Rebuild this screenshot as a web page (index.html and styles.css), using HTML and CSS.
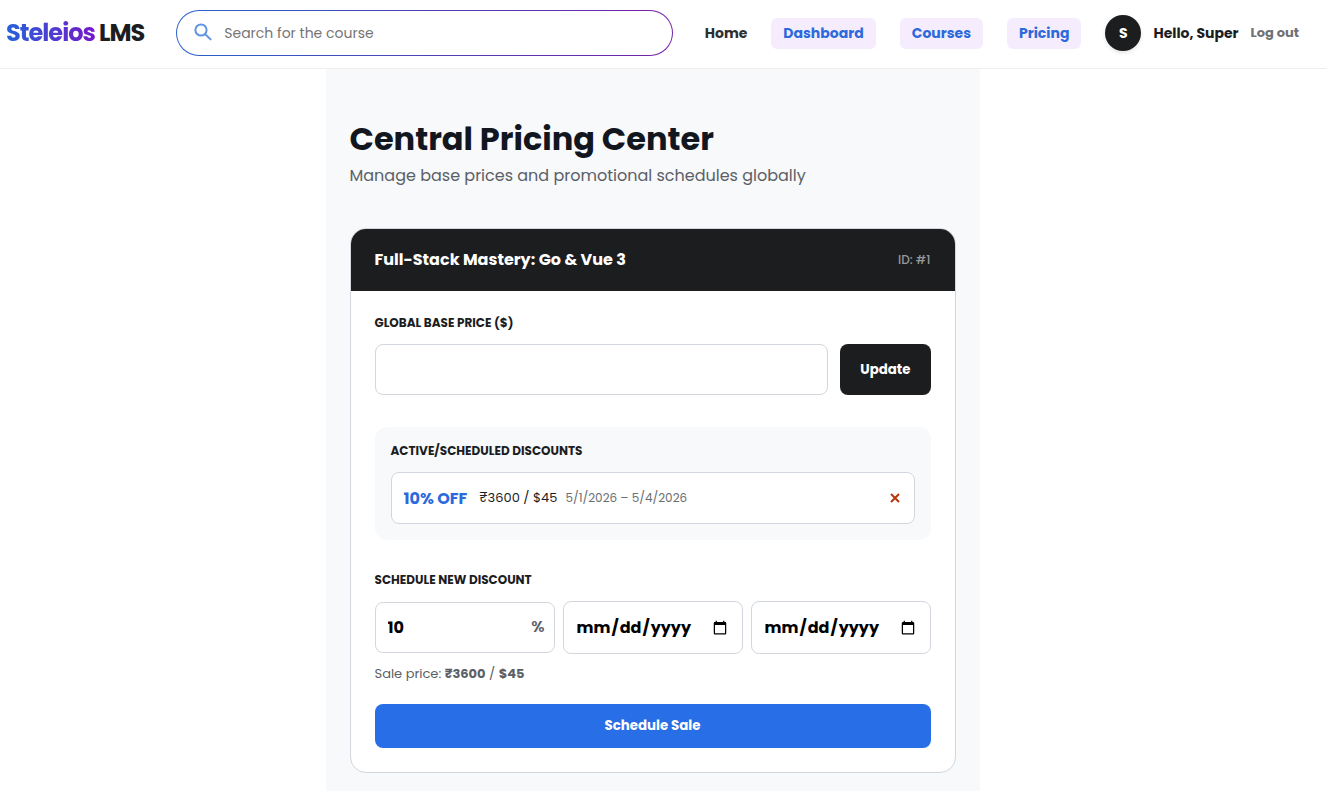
FILE: index.html
```html
<!DOCTYPE html>
<html lang="en">
<head>
    <meta charset="UTF-8">
    <meta name="viewport" content="width=device-width, initial-scale=1.0">
    <title>Steleios LMS</title>
    <link rel="stylesheet" href="styles.css">
</head>
<body>
    <header class="navbar">
        <a href="#" class="logo"><span class="logo-accent">Steleios</span> LMS</a>

        <form class="search" role="search">
            <svg class="search-icon" viewBox="0 0 18 18" aria-hidden="true">
                <circle cx="7" cy="6" r="5.6"/>
                <path d="M11.2 10.2 L16.6 15.4"/>
            </svg>
            <input type="search" class="search-input" placeholder="Search for the course" aria-label="Search for the course">
        </form>

        <nav class="nav-links">
            <a href="#" class="nav-link">Home</a>
            <a href="#" class="nav-link nav-pill">Dashboard</a>
            <a href="#" class="nav-link nav-pill">Courses</a>
            <a href="#" class="nav-link nav-pill">Pricing</a>
        </nav>

        <div class="user">
            <span class="avatar">S</span>
            <span class="user-name">Hello, Super</span>
            <button type="button" class="logout">Log out</button>
        </div>
    </header>

    <main class="pricing-page">
        <h1 class="page-title">Central Pricing Center</h1>
        <p class="page-subtitle">Manage base prices and promotional schedules globally</p>

        <section class="card">
            <div class="card-header">
                <h2 class="card-title">Full-Stack Mastery: Go &amp; Vue 3</h2>
                <span class="card-id">ID: #1</span>
            </div>

            <div class="card-body">
                <form class="section">
                    <label for="basePrice" class="label">Global Base Price ($)</label>
                    <div class="price-row">
                        <input type="number" id="basePrice" class="field">
                        <button type="button" class="btn btn-dark">Update</button>
                    </div>
                </form>

                <div class="section discounts">
                    <h3 class="label">Active/Scheduled Discounts</h3>
                    <div class="discount">
                        <strong class="discount-percent">10% OFF</strong>
                        <span class="discount-price">₹3600 / $45</span>
                        <span class="discount-dates">5/1/2026 – 5/4/2026</span>
                        <button type="button" class="remove" aria-label="Remove discount">
                            <svg class="remove-icon" viewBox="0 0 10 10" aria-hidden="true">
                                <path d="M1 1 L9 9 M9 1 L1 9"/>
                            </svg>
                        </button>
                    </div>
                </div>

                <form class="section">
                    <h3 class="label">Schedule New Discount</h3>
                    <div class="schedule-row">
                        <div class="percent-field">
                            <input type="text" inputmode="numeric" class="field" value="10" aria-label="Discount percent">
                            <span class="percent-sign">%</span>
                        </div>
                        <input type="date" class="field field-date" aria-label="Start date">
                        <input type="date" class="field field-date" aria-label="End date">
                    </div>
                    <p class="sale-price">Sale price: <strong>₹3600</strong> / <strong>$45</strong></p>
                    <button type="button" class="btn btn-primary">Schedule Sale</button>
                </form>
            </div>
        </section>
    </main>
</body>
</html>
```

FILE: styles.css
```css
* {
    box-sizing: border-box;
}

body {
    margin: 0;
    min-height: 100vh;
    display: flex;
    flex-direction: column;
    font-family: Poppins, Inter, "Noto Sans", sans-serif;
    color: #1c1d1f;
    background: #fff;
}

h1, h2, h3, p {
    margin: 0;
}

a {
    color: inherit;
    text-decoration: none;
}

button, input {
    font-family: inherit;
}

button {
    cursor: pointer;
}

/* Navbar */
.navbar {
    display: flex;
    align-items: center;
    padding: 10px 27px 12px 6px;
    border-bottom: 1px solid #eee;
}

.logo {
    font-size: 24px;
    line-height: 36px;
    font-weight: 700;
    letter-spacing: -1px;
    white-space: nowrap;
}

.logo-accent {
    background: linear-gradient(90deg, #2563d9, #7518c9);
    -webkit-background-clip: text;
    background-clip: text;
    color: transparent;
}

.search {
    flex: 1;
    display: flex;
    align-items: center;
    gap: 12px;
    height: 46px;
    margin: 0 32px;
    padding: 0 17px;
    border: 1px solid transparent;
    border-radius: 23px;
    background: linear-gradient(#fff, #fff) padding-box, linear-gradient(90deg, #2563c9, #7520a8) border-box;
}

.search-icon {
    width: 18px;
    height: 18px;
    fill: none;
    stroke: #5f96e3;
    stroke-width: 2;
    stroke-linecap: round;
    overflow: visible;
}

.search-input {
    flex: 1;
    min-width: 0;
    padding: 0;
    border: none;
    outline: none;
    background: none;
    font-size: 14px;
}

.search-input::placeholder {
    color: #757575;
}

.nav-links {
    display: flex;
    align-items: center;
    gap: 24px;
}

.nav-link {
    font-size: 14px;
    line-height: 21px;
    font-weight: 700;
    color: #2d2f31;
}

.nav-pill {
    padding: 5px 12px;
    border-radius: 6px;
    background: #f5edfd;
    color: #2b69dc;
}

.user {
    display: flex;
    align-items: center;
    gap: 12px;
    margin-left: 24px;
    white-space: nowrap;
}

.avatar {
    display: flex;
    align-items: center;
    justify-content: center;
    width: 36px;
    height: 36px;
    border-radius: 50%;
    background: #1c1d1f;
    box-shadow: 0 2px 4px rgba(0, 0, 0, 0.1);
    color: #fff;
    font-size: 14px;
    font-weight: 700;
}

.user-name {
    font-size: 14px;
    font-weight: 700;
}

.logout {
    padding: 0;
    border: none;
    background: none;
    color: #6f7173;
    font-size: 13px;
    font-weight: 700;
}

/* Pricing page */
.pricing-page {
    flex: 1;
    width: calc(50% - 9px);
    min-width: 600px;
    margin-left: calc(25% - 6px);
    padding: 48px 24px 18px;
    background: #f7f9fb;
}

.page-title {
    font-size: 32px;
    line-height: 43px;
    font-weight: 700;
    color: #12161f;
}

.page-subtitle {
    margin: 4px 0 40px;
    font-size: 16px;
    line-height: 24px;
    color: #5b6066;
}

.card {
    border: 1px solid #d1d7dc;
    border-radius: 16px;
    background: #fff;
    overflow: hidden;
}

.card-header {
    display: flex;
    align-items: center;
    justify-content: space-between;
    padding: 19px 24px;
    background: #1c1d1f;
    color: #fff;
}

.card-title {
    font-size: 16px;
    line-height: 24px;
    font-weight: 700;
}

.card-id {
    font-size: 12px;
    font-weight: 500;
    color: #98999b;
}

.card-body {
    display: flex;
    flex-direction: column;
    gap: 32px;
    padding: 24px;
}

.label {
    display: block;
    margin-bottom: 13px;
    font-size: 12px;
    line-height: 16px;
    font-weight: 700;
    text-transform: uppercase;
}

.field {
    width: 100%;
    min-width: 0;
    height: 51px;
    padding: 0 12px;
    border: 1px solid #d1d7dc;
    border-radius: 8px;
    background: #fff;
    color: #000;
    font-size: 16px;
    font-weight: 700;
}

.field-date {
    height: 53px;
}

.price-row {
    display: flex;
    gap: 12px;
}

.btn {
    border: none;
    border-radius: 8px;
    color: #fff;
    font-weight: 700;
}

.btn-dark {
    padding: 0 20px;
    background: #1c1d1f;
}

.btn-primary {
    width: 100%;
    height: 44px;
    background: #286ee6;
}

.discounts {
    padding: 16px;
    border-radius: 12px;
    background: #f7f9fb;
}

.discount {
    display: flex;
    align-items: center;
    height: 52px;
    padding: 0 12px;
    border: 1px solid #d1d7dc;
    border-radius: 8px;
    background: #fff;
}

.discount-percent {
    margin-right: 12px;
    font-size: 16px;
    color: #2b69dc;
}

.discount-price {
    margin-right: 8px;
    font-size: 13px;
}

.discount-dates {
    font-size: 12px;
    color: #6a6f73;
}

.remove {
    display: flex;
    margin-left: auto;
    padding: 2px;
    border: none;
    background: none;
}

.remove-icon {
    width: 10px;
    height: 10px;
    stroke: #b9350b;
    stroke-width: 2;
}

.schedule-row {
    display: grid;
    grid-template-columns: repeat(3, 1fr);
    align-items: center;
    gap: 8px;
}

.percent-field {
    position: relative;
}

.percent-sign {
    position: absolute;
    top: 0;
    right: 10px;
    line-height: 50px;
    font-size: 16px;
    font-weight: 600;
    color: #5b6066;
}

.sale-price {
    margin: 10px 0 20px;
    font-size: 13px;
    line-height: 20px;
    color: #5b6066;
}
```
